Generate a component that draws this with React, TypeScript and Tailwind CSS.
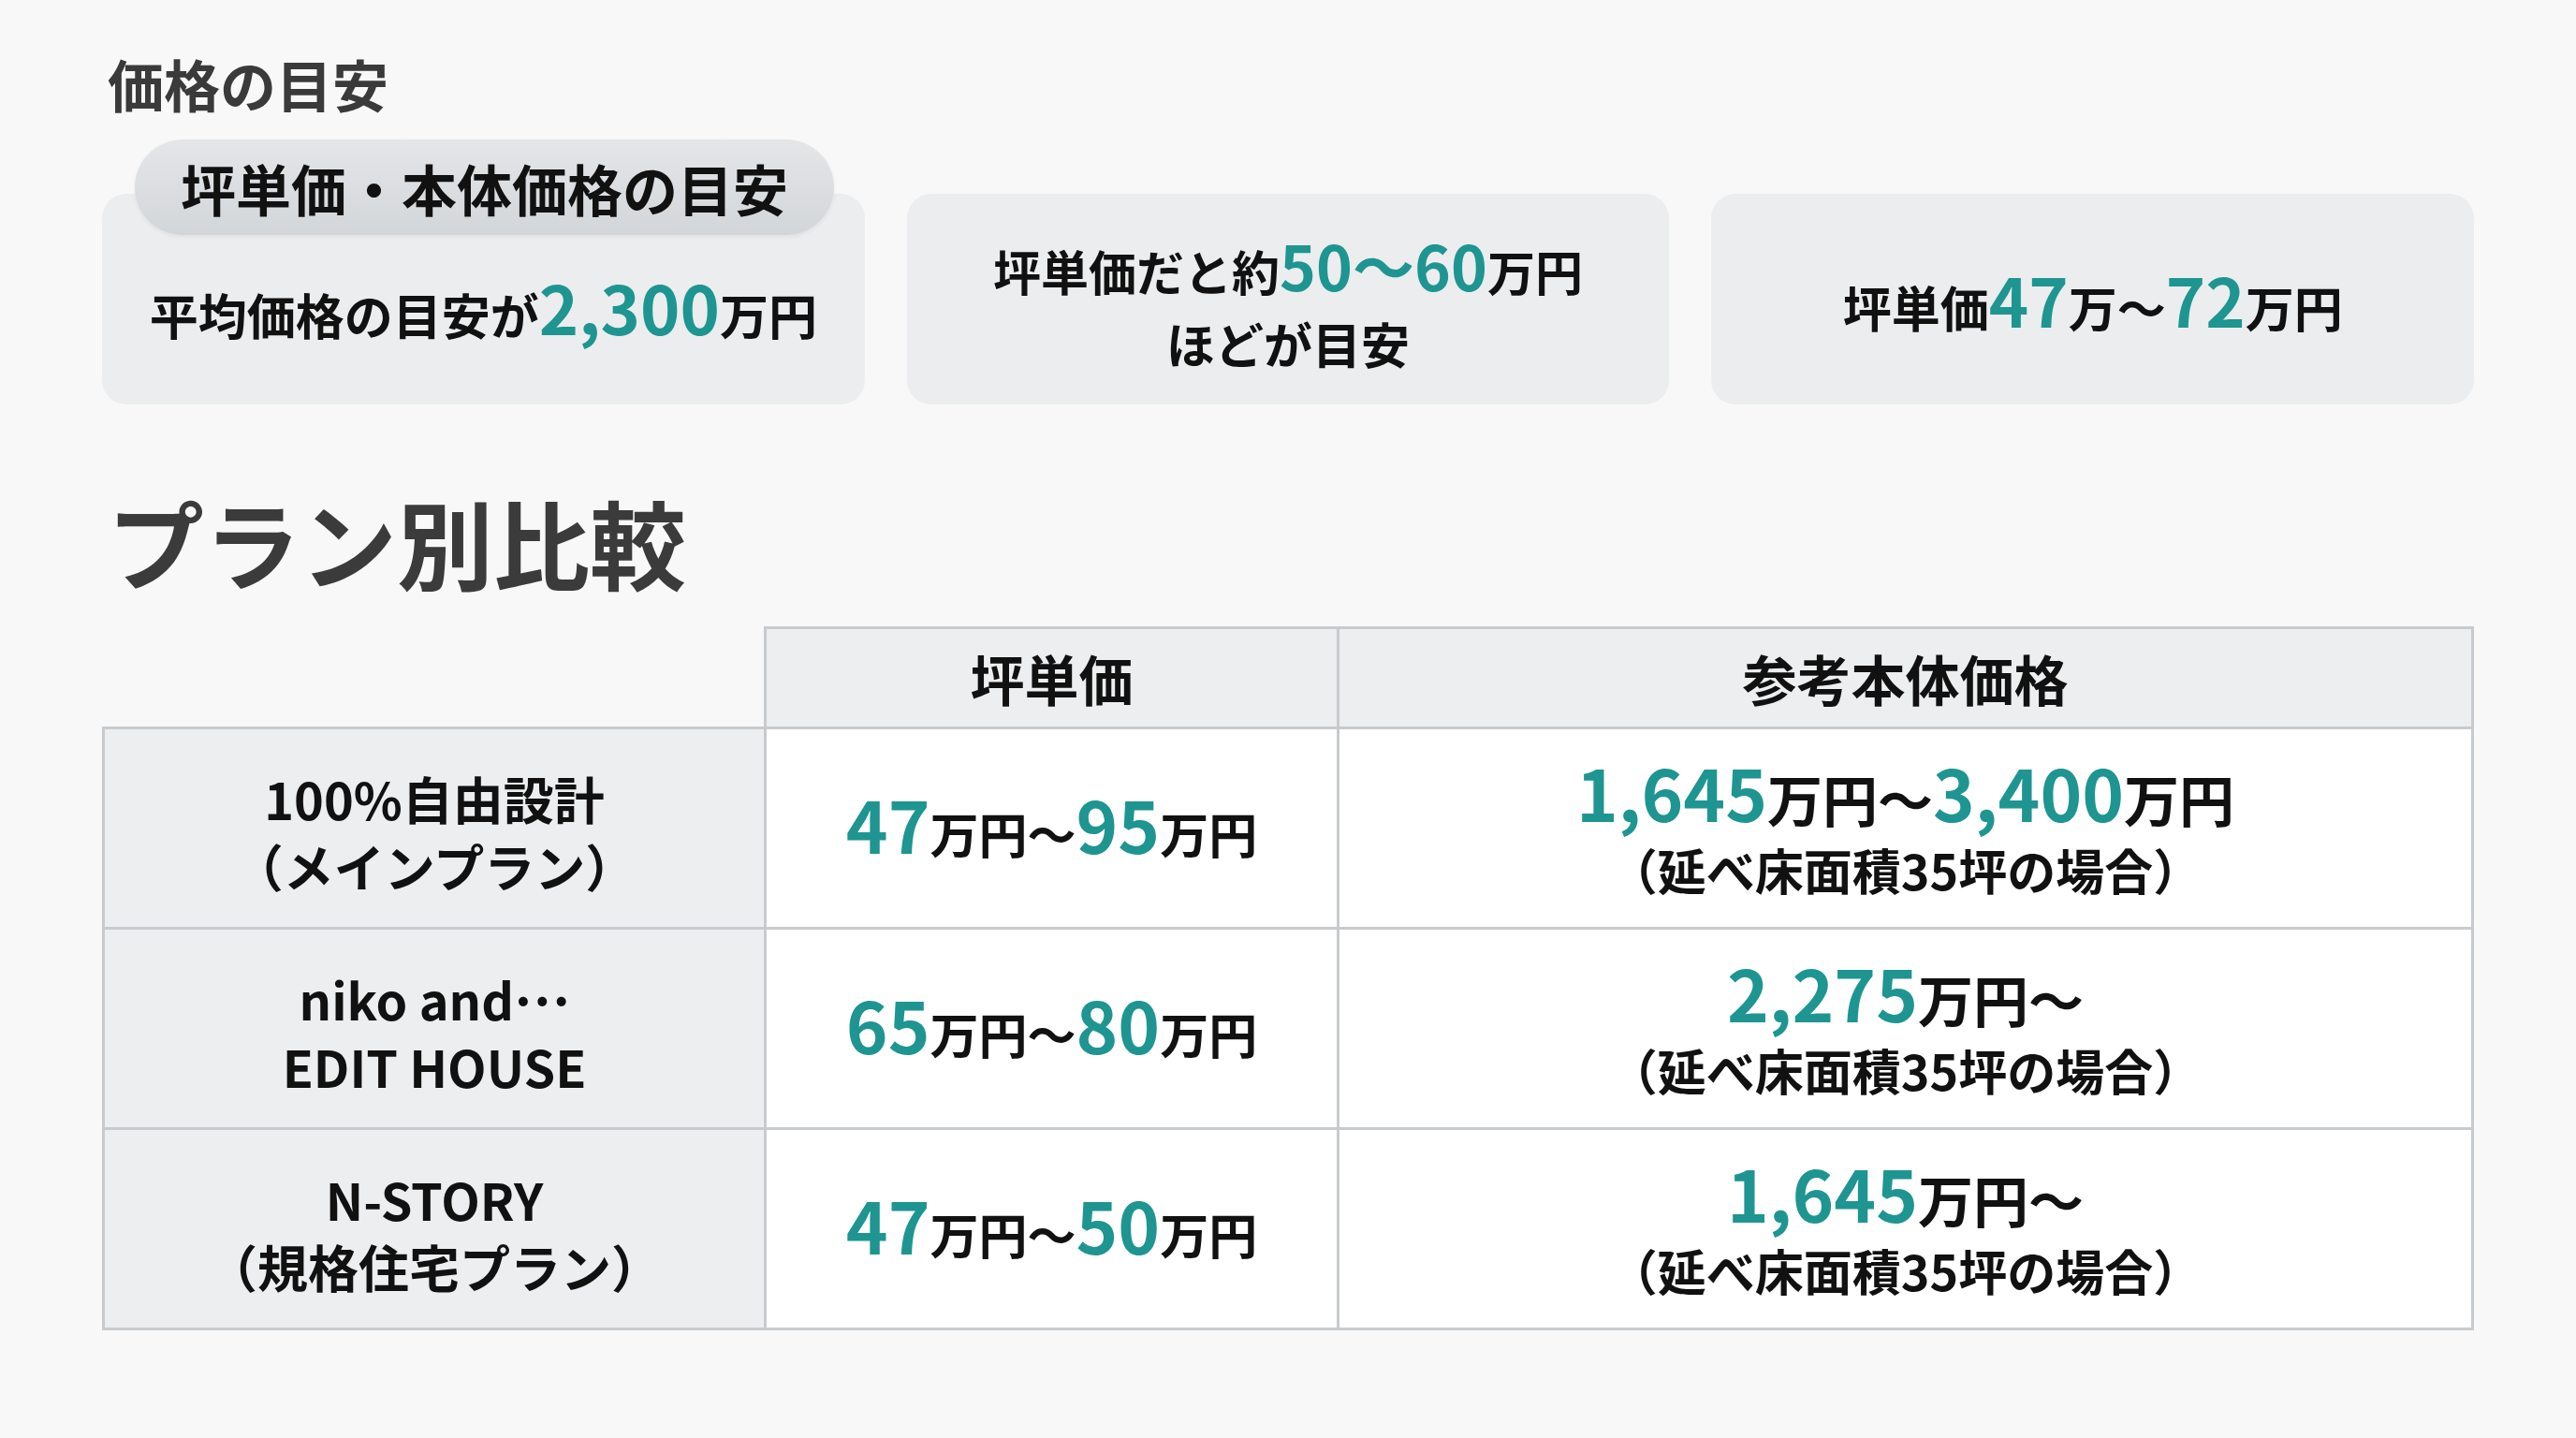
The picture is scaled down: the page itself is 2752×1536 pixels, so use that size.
import type { ReactNode } from "react";

export default function App() {
  const teal = "text-[#1e9591]";
  const cellBorder = "border-[3px] border-[#c8cbce]";
  const rows: { name: ReactNode[]; a: string; b: string; total: ReactNode }[] = [
    {
      name: ["100%自由設計", "（メインプラン）"],
      a: "47",
      b: "95",
      total: (
        <>
          <span className={`text-[76px] ${teal}`}>1,645</span>万円〜<span className={`text-[76px] ${teal}`}>3,400</span>万円
        </>
      ),
    },
    {
      name: [
        <>
          niko and<span className="relative top-[-0.28em]">…</span>
        </>,
        "EDIT HOUSE",
      ],
      a: "65",
      b: "80",
      total: (
        <>
          <span className={`text-[76px] ${teal}`}>2,275</span>万円〜
        </>
      ),
    },
    {
      name: ["N-STORY", "（規格住宅プラン）"],
      a: "47",
      b: "50",
      total: (
        <>
          <span className={`text-[76px] ${teal}`}>1,645</span>万円〜
        </>
      ),
    },
  ];

  return (
    <div className="h-[1536px] w-[2752px] overflow-hidden bg-[#f8f8f8] px-[109px] pt-[53px] font-bold text-[#111] [font-family:'Noto_Sans_CJK_JP','Noto_Sans',sans-serif]">
      <h2 className="pl-[6px] text-[60px] leading-[72px] text-[#3a3a3a]">価格の目安</h2>

      <div className="mt-[82px] grid grid-cols-3 gap-[45px]">
        <div className="relative flex h-[225px] items-center justify-center rounded-[26px] bg-[#ebedef] pt-[22px]">
          <div className="absolute left-[35px] top-[-58px] flex h-[102px] items-center rounded-full bg-gradient-to-b from-[#e4e6e8] to-[#d3d6d9] px-[49px] text-[59px] leading-none shadow-[0_2px_4px_rgba(0,0,0,0.06)]">
            坪単価・本体価格の目安
          </div>
          <p className="text-[52px] leading-[77px]">
            平均価格の目安が<span className={`text-[72px] ${teal}`}>2,300</span>万円
          </p>
        </div>
        <div className="flex h-[225px] flex-col items-center justify-center rounded-[26px] bg-[#ebedef] pt-[10px]">
          <p className="text-[51px] leading-[77px]">
            坪単価だと約<span className={`text-[66px] ${teal}`}>50〜60</span>万円
          </p>
          <p className="text-[52px] leading-[77px]">ほどが目安</p>
        </div>
        <div className="flex h-[225px] items-center justify-center rounded-[26px] bg-[#ebedef] pt-[6px]">
          <p className="text-[52px] leading-[77px]">
            坪単価<span className={`text-[72px] ${teal}`}>47</span>万〜<span className={`text-[72px] ${teal}`}>72</span>万円
          </p>
        </div>
      </div>

      <h2 className="mt-[86px] pl-[6px] text-[103px] leading-[122px] text-[#3b3b3b]">プラン別比較</h2>

      <table className="mt-[29px] w-[2534px] table-fixed border-collapse">
        <colgroup>
          <col className="w-[707px]" />
          <col className="w-[612px]" />
          <col />
        </colgroup>
        <thead>
          <tr className="h-[107px]">
            <th className="border-0 p-0"></th>
            <th className={`${cellBorder} bg-[#eceef0] p-0 text-[58px] font-bold leading-none`}>坪単価</th>
            <th className={`${cellBorder} bg-[#eceef0] p-0 text-[58px] font-bold leading-none`}>参考本体価格</th>
          </tr>
        </thead>
        <tbody>
          {rows.map((r, i) => (
            <tr key={i} className="h-[214px]">
              <td className={`${cellBorder} bg-[#eceef0] p-0 pt-[8px] text-center text-[54px] leading-[72px]`}>
                <div>{r.name[0]}</div>
                <div>{r.name[1]}</div>
              </td>
              <td className={`${cellBorder} bg-white p-0 text-center`}>
                <p className="text-[52px] leading-[80px]">
                  <span className={`text-[76px] ${teal}`}>{r.a}</span>万円〜<span className={`text-[76px] ${teal}`}>{r.b}</span>万円
                </p>
              </td>
              <td className={`${cellBorder} bg-white p-0 text-center`}>
                <p className="text-[59px] leading-[80px]">{r.total}</p>
                <p className="text-[52px] leading-[72px]">（延べ床面積35坪の場合）</p>
              </td>
            </tr>
          ))}
        </tbody>
      </table>
    </div>
  );
}
